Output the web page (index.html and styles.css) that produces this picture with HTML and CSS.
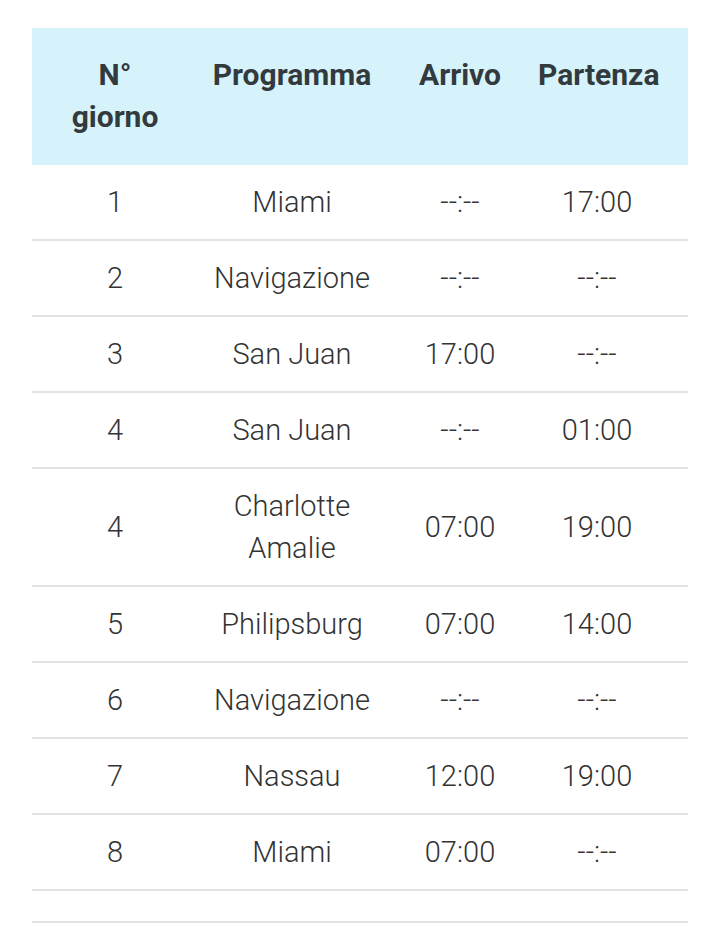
FILE: index.html
```html
<!DOCTYPE html>
<html lang="it">
<head>
<meta charset="utf-8">
<title>Itinerario</title>
<link rel="stylesheet" href="styles.css">
</head>
<body>
<div class="page">
  <table class="itinerary">
    <colgroup>
      <col class="c-day">
      <col class="c-prog">
      <col class="c-arr">
      <col class="c-dep">
    </colgroup>
    <thead>
      <tr>
        <th>N°<br>giorno</th>
        <th>Programma</th>
        <th>Arrivo</th>
        <th class="last">Partenza</th>
      </tr>
    </thead>
    <tbody>
      <tr><td>1</td><td>Miami</td><td>--:--</td><td class="last">17:00</td></tr>
      <tr><td>2</td><td>Navigazione</td><td>--:--</td><td class="last">--:--</td></tr>
      <tr><td>3</td><td>San Juan</td><td>17:00</td><td class="last">--:--</td></tr>
      <tr><td>4</td><td>San Juan</td><td>--:--</td><td class="last">01:00</td></tr>
      <tr><td>4</td><td>Charlotte Amalie</td><td>07:00</td><td class="last">19:00</td></tr>
      <tr><td>5</td><td>Philipsburg</td><td>07:00</td><td class="last">14:00</td></tr>
      <tr><td>6</td><td>Navigazione</td><td>--:--</td><td class="last">--:--</td></tr>
      <tr><td>7</td><td>Nassau</td><td>12:00</td><td class="last">19:00</td></tr>
      <tr><td>8</td><td>Miami</td><td>07:00</td><td class="last">--:--</td></tr>
      <tr class="empty"><td></td><td></td><td></td><td></td></tr>
    </tbody>
  </table>
</div>
</body>
</html>
```
FILE: styles.css
```css
html, body {
  margin: 0;
  padding: 0;
  background: #ffffff;
}

.page {
  padding: 28px 32px;
  font-family: Roboto, "Noto Sans", "Liberation Sans", sans-serif;
  color: #383838;
}

.itinerary {
  width: 656px;
  border-collapse: collapse;
  table-layout: fixed;
}

.c-day { width: 166px; }
.c-prog { width: 188px; }
.c-arr { width: 148px; }
.c-dep { width: 154px; }

.itinerary th {
  background: #d6f3fb;
  font-weight: 700;
  font-size: 30px;
  line-height: 42px;
  color: #333a3e;
  text-align: center;
  vertical-align: top;
  padding: 26px 4px 27px;
}

.itinerary td {
  font-size: 29px;
  line-height: 42px;
  font-weight: 300;
  color: #333333;
  text-align: center;
  vertical-align: middle;
  padding: 16px 4px;
  border-bottom: 2px solid #e2e2e2;
}

.itinerary th.last,
.itinerary td.last {
  padding-right: 32px;
}

.itinerary tr.empty td {
  padding: 0;
  height: 30px;
}
```
